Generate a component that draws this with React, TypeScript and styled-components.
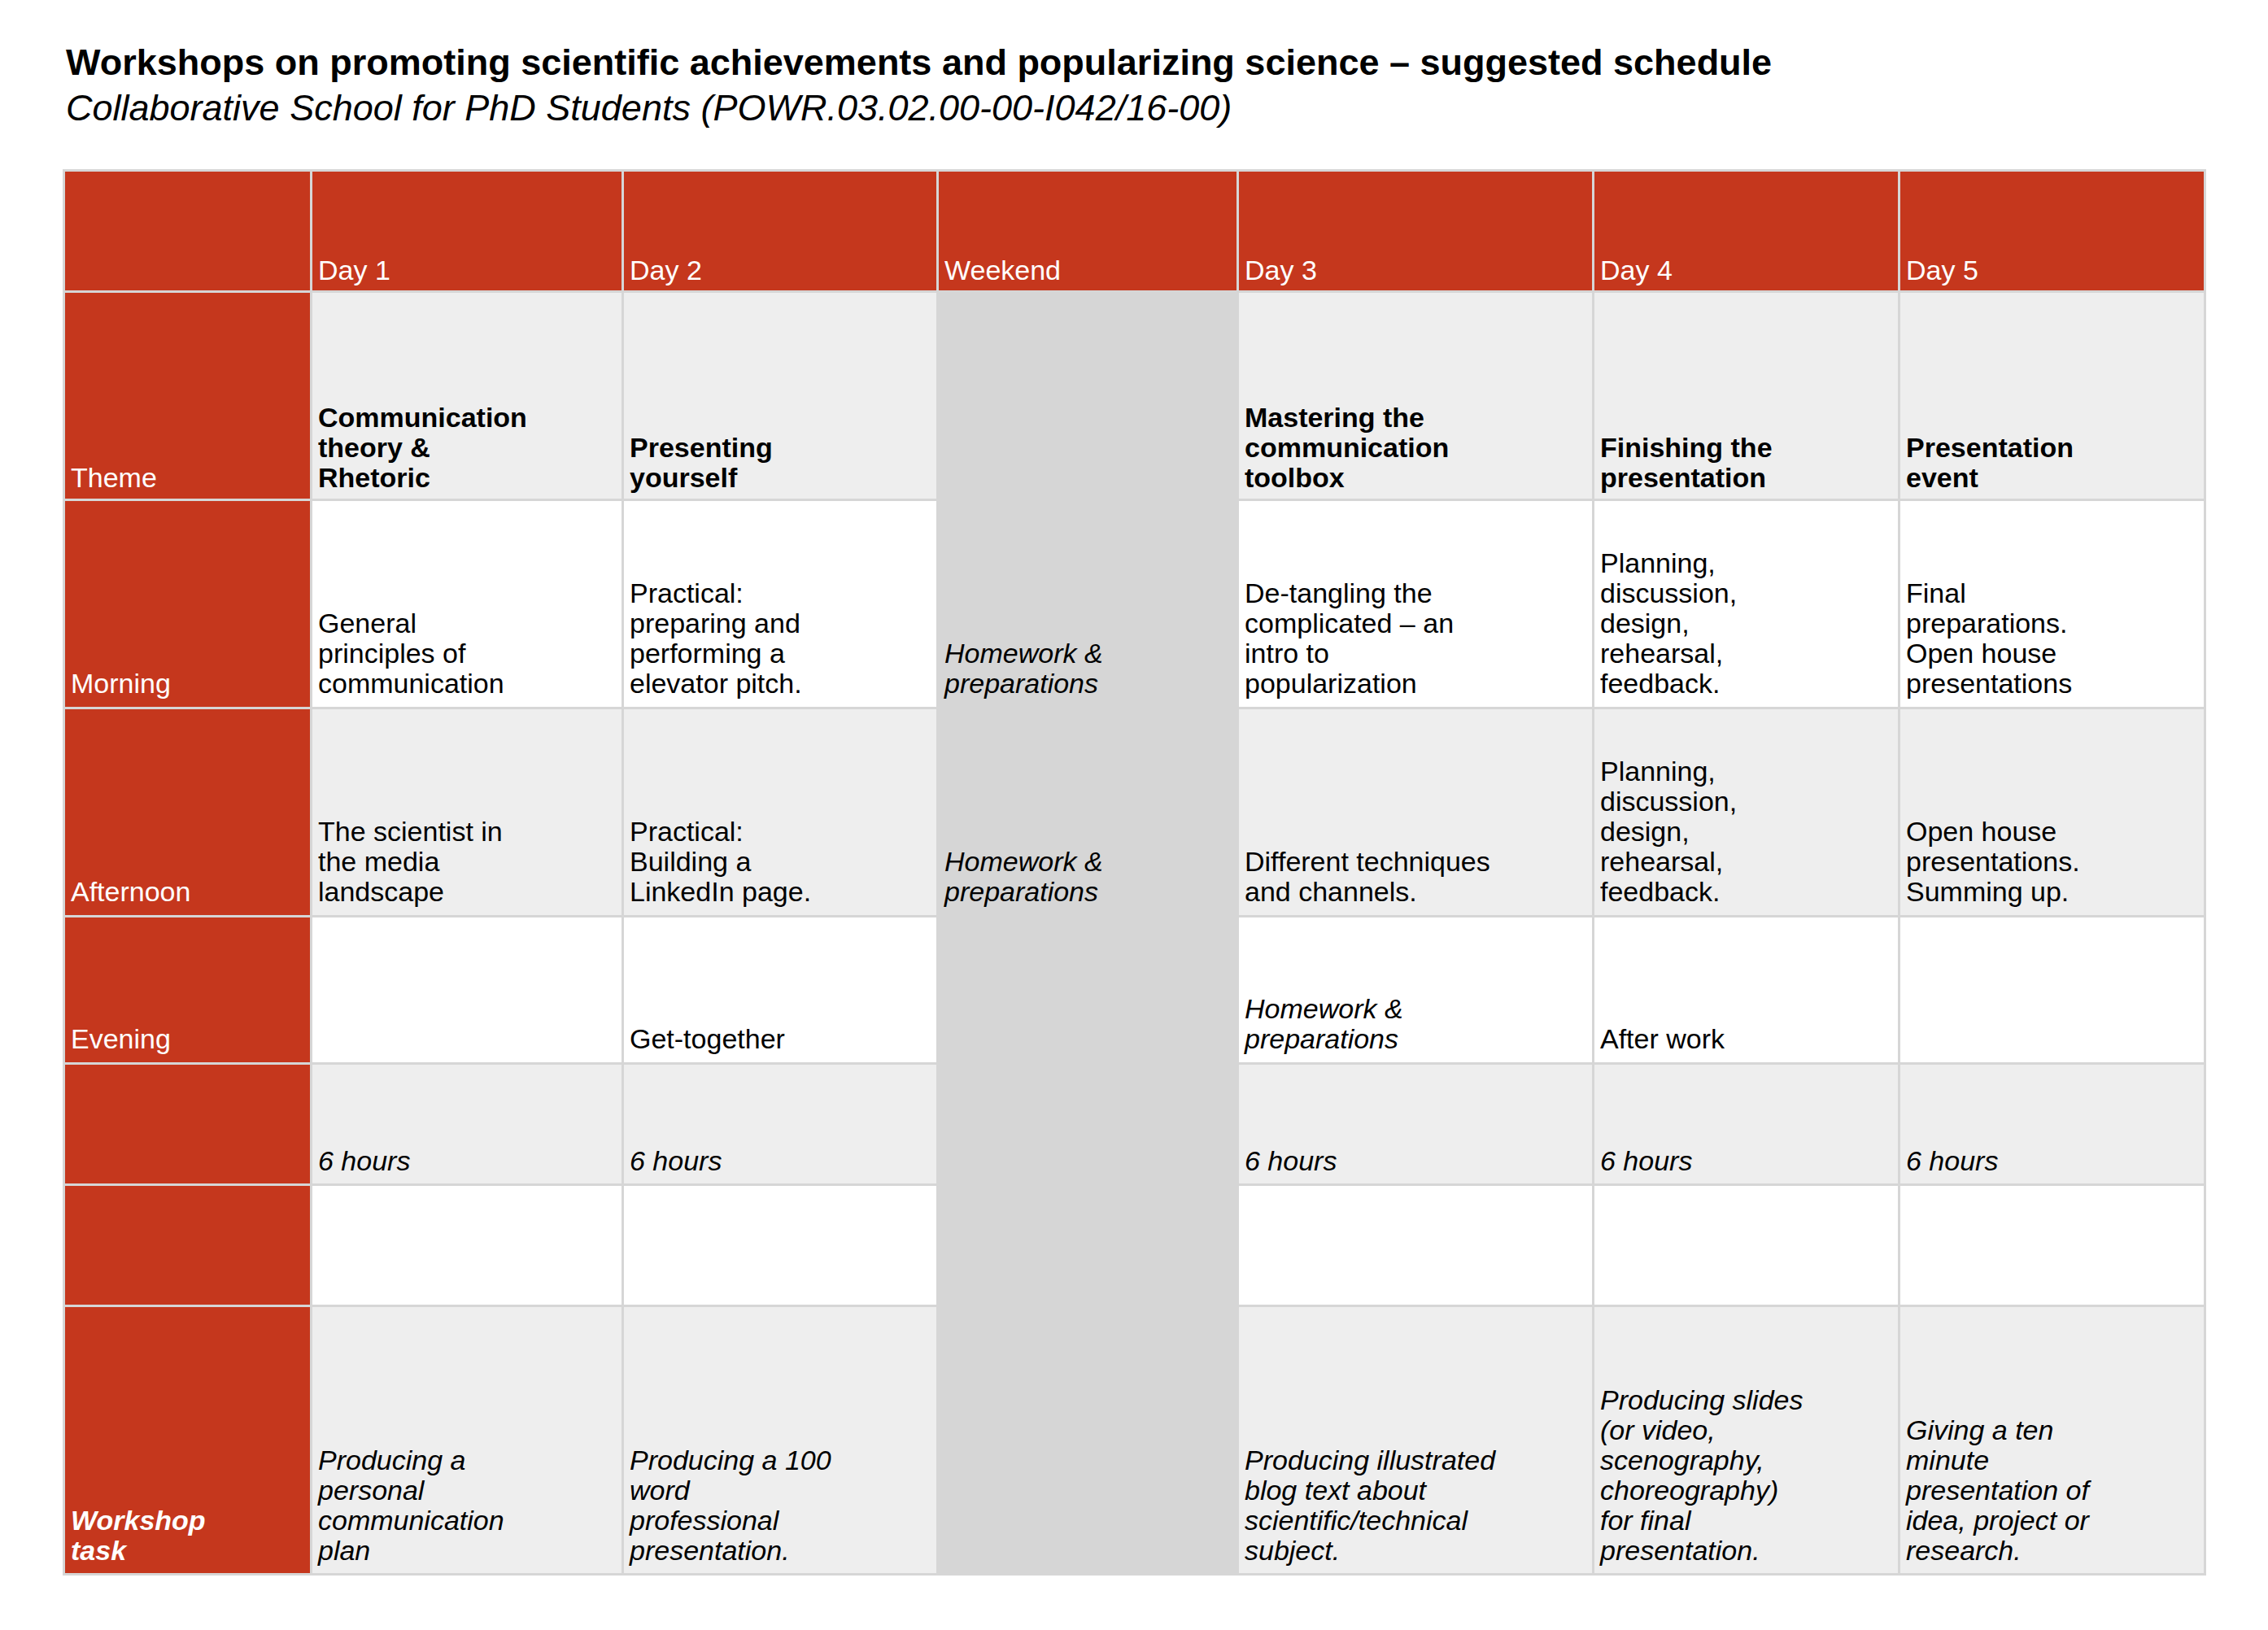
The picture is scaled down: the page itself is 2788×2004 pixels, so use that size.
import React from 'react';
import styled, { createGlobalStyle } from 'styled-components';

const GlobalStyle = createGlobalStyle`
  html, body {
    margin: 0;
    padding: 0;
    background: #ffffff;
  }
  body {
    font-family: "Liberation Sans", Arial, Helvetica, sans-serif;
    color: #000000;
  }
`;

type Tone = 'red' | 'light' | 'white' | 'weekend';
type Variant = 'regular' | 'bold' | 'italic' | 'boldItalic';

const toneColor: Record<Tone, string> = {
  red: '#c5371d',
  light: '#eeeeee',
  white: '#ffffff',
  weekend: '#d6d6d6',
};

const Page = styled.main`
  padding: 49px 0 60px 77px;
`;

const Heading = styled.header`
  padding-left: 4px;
  margin-bottom: 47px;
`;

const Title = styled.h1`
  margin: 0;
  font-size: 45px;
  line-height: 56px;
  font-weight: 700;
  white-space: nowrap;
`;

const Subtitle = styled.p`
  margin: 0;
  font-size: 45px;
  line-height: 56px;
  font-style: italic;
  font-weight: 400;
  white-space: nowrap;
`;

const Schedule = styled.section`
  display: grid;
  grid-template-columns: 301px 380px 384px 366px 434px 373px 373px;
  grid-template-rows: 146px 253px 253px 253px 178px 146px 146px 327px;
  gap: 3px;
  padding: 3px;
  background: #d6d6d6;
  width: max-content;
`;

const Cell = styled.div<{ $tone: Tone; $pad: number }>`
  box-sizing: border-box;
  min-width: 0;
  background: ${(p) => toneColor[p.$tone]};
  color: ${(p) => (p.$tone === 'red' ? '#ffffff' : '#000000')};
  display: flex;
  flex-direction: column;
  justify-content: flex-end;
  padding: 0 6px ${(p) => p.$pad}px 7px;
  font-size: 34px;
  line-height: 37px;
`;

const Line = styled.span<{ $variant: Variant }>`
  display: block;
  white-space: nowrap;
  font-weight: ${(p) => (p.$variant === 'bold' || p.$variant === 'boldItalic' ? 700 : 400)};
  font-style: ${(p) => (p.$variant === 'italic' || p.$variant === 'boldItalic' ? 'italic' : 'normal')};
`;

type Entry = { lines: string[]; variant?: Variant } | null;

type Row = {
  label: string[];
  labelVariant: Variant;
  tone: Tone;
  pad: number;
  variant: Variant;
  cells: Entry[];
};

const days = ['Day 1', 'Day 2', 'Weekend', 'Day 3', 'Day 4', 'Day 5'];

const homework: Entry = { lines: ['Homework &', 'preparations'], variant: 'italic' };
const planning: Entry = { lines: ['Planning,', 'discussion,', 'design,', 'rehearsal,', 'feedback.'] };
const hours: Entry = { lines: ['6 hours'] };

const rows: Row[] = [
  {
    label: ['Theme'],
    labelVariant: 'regular',
    tone: 'light',
    pad: 7,
    variant: 'bold',
    cells: [
      { lines: ['Communication', 'theory &', 'Rhetoric'] },
      { lines: ['Presenting', 'yourself'] },
      null,
      { lines: ['Mastering the', 'communication', 'toolbox'] },
      { lines: ['Finishing the', 'presentation'] },
      { lines: ['Presentation', 'event'] },
    ],
  },
  {
    label: ['Morning'],
    labelVariant: 'regular',
    tone: 'white',
    pad: 10,
    variant: 'regular',
    cells: [
      { lines: ['General', 'principles of', 'communication'] },
      { lines: ['Practical:', 'preparing and', 'performing a', 'elevator pitch.'] },
      homework,
      { lines: ['De-tangling the', 'complicated – an', 'intro to', 'popularization'] },
      planning,
      { lines: ['Final', 'preparations.', 'Open house', 'presentations'] },
    ],
  },
  {
    label: ['Afternoon'],
    labelVariant: 'regular',
    tone: 'light',
    pad: 10,
    variant: 'regular',
    cells: [
      { lines: ['The scientist in', 'the media', 'landscape'] },
      { lines: ['Practical:', 'Building a', 'LinkedIn page.'] },
      homework,
      { lines: ['Different techniques', 'and channels.'] },
      planning,
      { lines: ['Open house', 'presentations.', 'Summing up.'] },
    ],
  },
  {
    label: ['Evening'],
    labelVariant: 'regular',
    tone: 'white',
    pad: 10,
    variant: 'regular',
    cells: [null, { lines: ['Get-together'] }, null, homework, { lines: ['After work'] }, null],
  },
  {
    label: [],
    labelVariant: 'regular',
    tone: 'light',
    pad: 9,
    variant: 'italic',
    cells: [hours, hours, null, hours, hours, hours],
  },
  {
    label: [],
    labelVariant: 'regular',
    tone: 'white',
    pad: 9,
    variant: 'regular',
    cells: [null, null, null, null, null, null],
  },
  {
    label: ['Workshop', 'task'],
    labelVariant: 'boldItalic',
    tone: 'light',
    pad: 9,
    variant: 'italic',
    cells: [
      { lines: ['Producing a', 'personal', 'communication', 'plan'] },
      { lines: ['Producing a 100', 'word', 'professional', 'presentation.'] },
      null,
      { lines: ['Producing illustrated', 'blog text about', 'scientific/technical', 'subject.'] },
      {
        lines: ['Producing slides', '(or video,', 'scenography,', 'choreography)', 'for final', 'presentation.'],
      },
      { lines: ['Giving a ten', 'minute', 'presentation of', 'idea, project or', 'research.'] },
    ],
  },
];

const Lines: React.FC<{ lines: string[]; variant: Variant }> = ({ lines, variant }) => (
  <>
    {lines.map((l, i) => (
      <Line key={i} $variant={variant}>
        {l}
      </Line>
    ))}
  </>
);

export default function App() {
  return (
    <>
      <GlobalStyle />
      <Page>
        <Heading>
          <Title>Workshops on promoting scientific achievements and popularizing science – suggested schedule</Title>
          <Subtitle>Collaborative School for PhD Students (POWR.03.02.00-00-I042/16-00)</Subtitle>
        </Heading>
        <Schedule>
          <Cell $tone="red" $pad={6} />
          {days.map((d) => (
            <Cell key={d} $tone="red" $pad={6}>
              <Line $variant="regular">{d}</Line>
            </Cell>
          ))}
          {rows.map((row, r) => (
            <React.Fragment key={r}>
              <Cell $tone="red" $pad={row.pad}>
                <Lines lines={row.label} variant={row.labelVariant} />
              </Cell>
              {row.cells.map((c, i) => (
                <Cell key={i} $tone={i === 2 ? 'weekend' : row.tone} $pad={row.pad}>
                  {c && <Lines lines={c.lines} variant={c.variant ?? row.variant} />}
                </Cell>
              ))}
            </React.Fragment>
          ))}
        </Schedule>
      </Page>
    </>
  );
}
